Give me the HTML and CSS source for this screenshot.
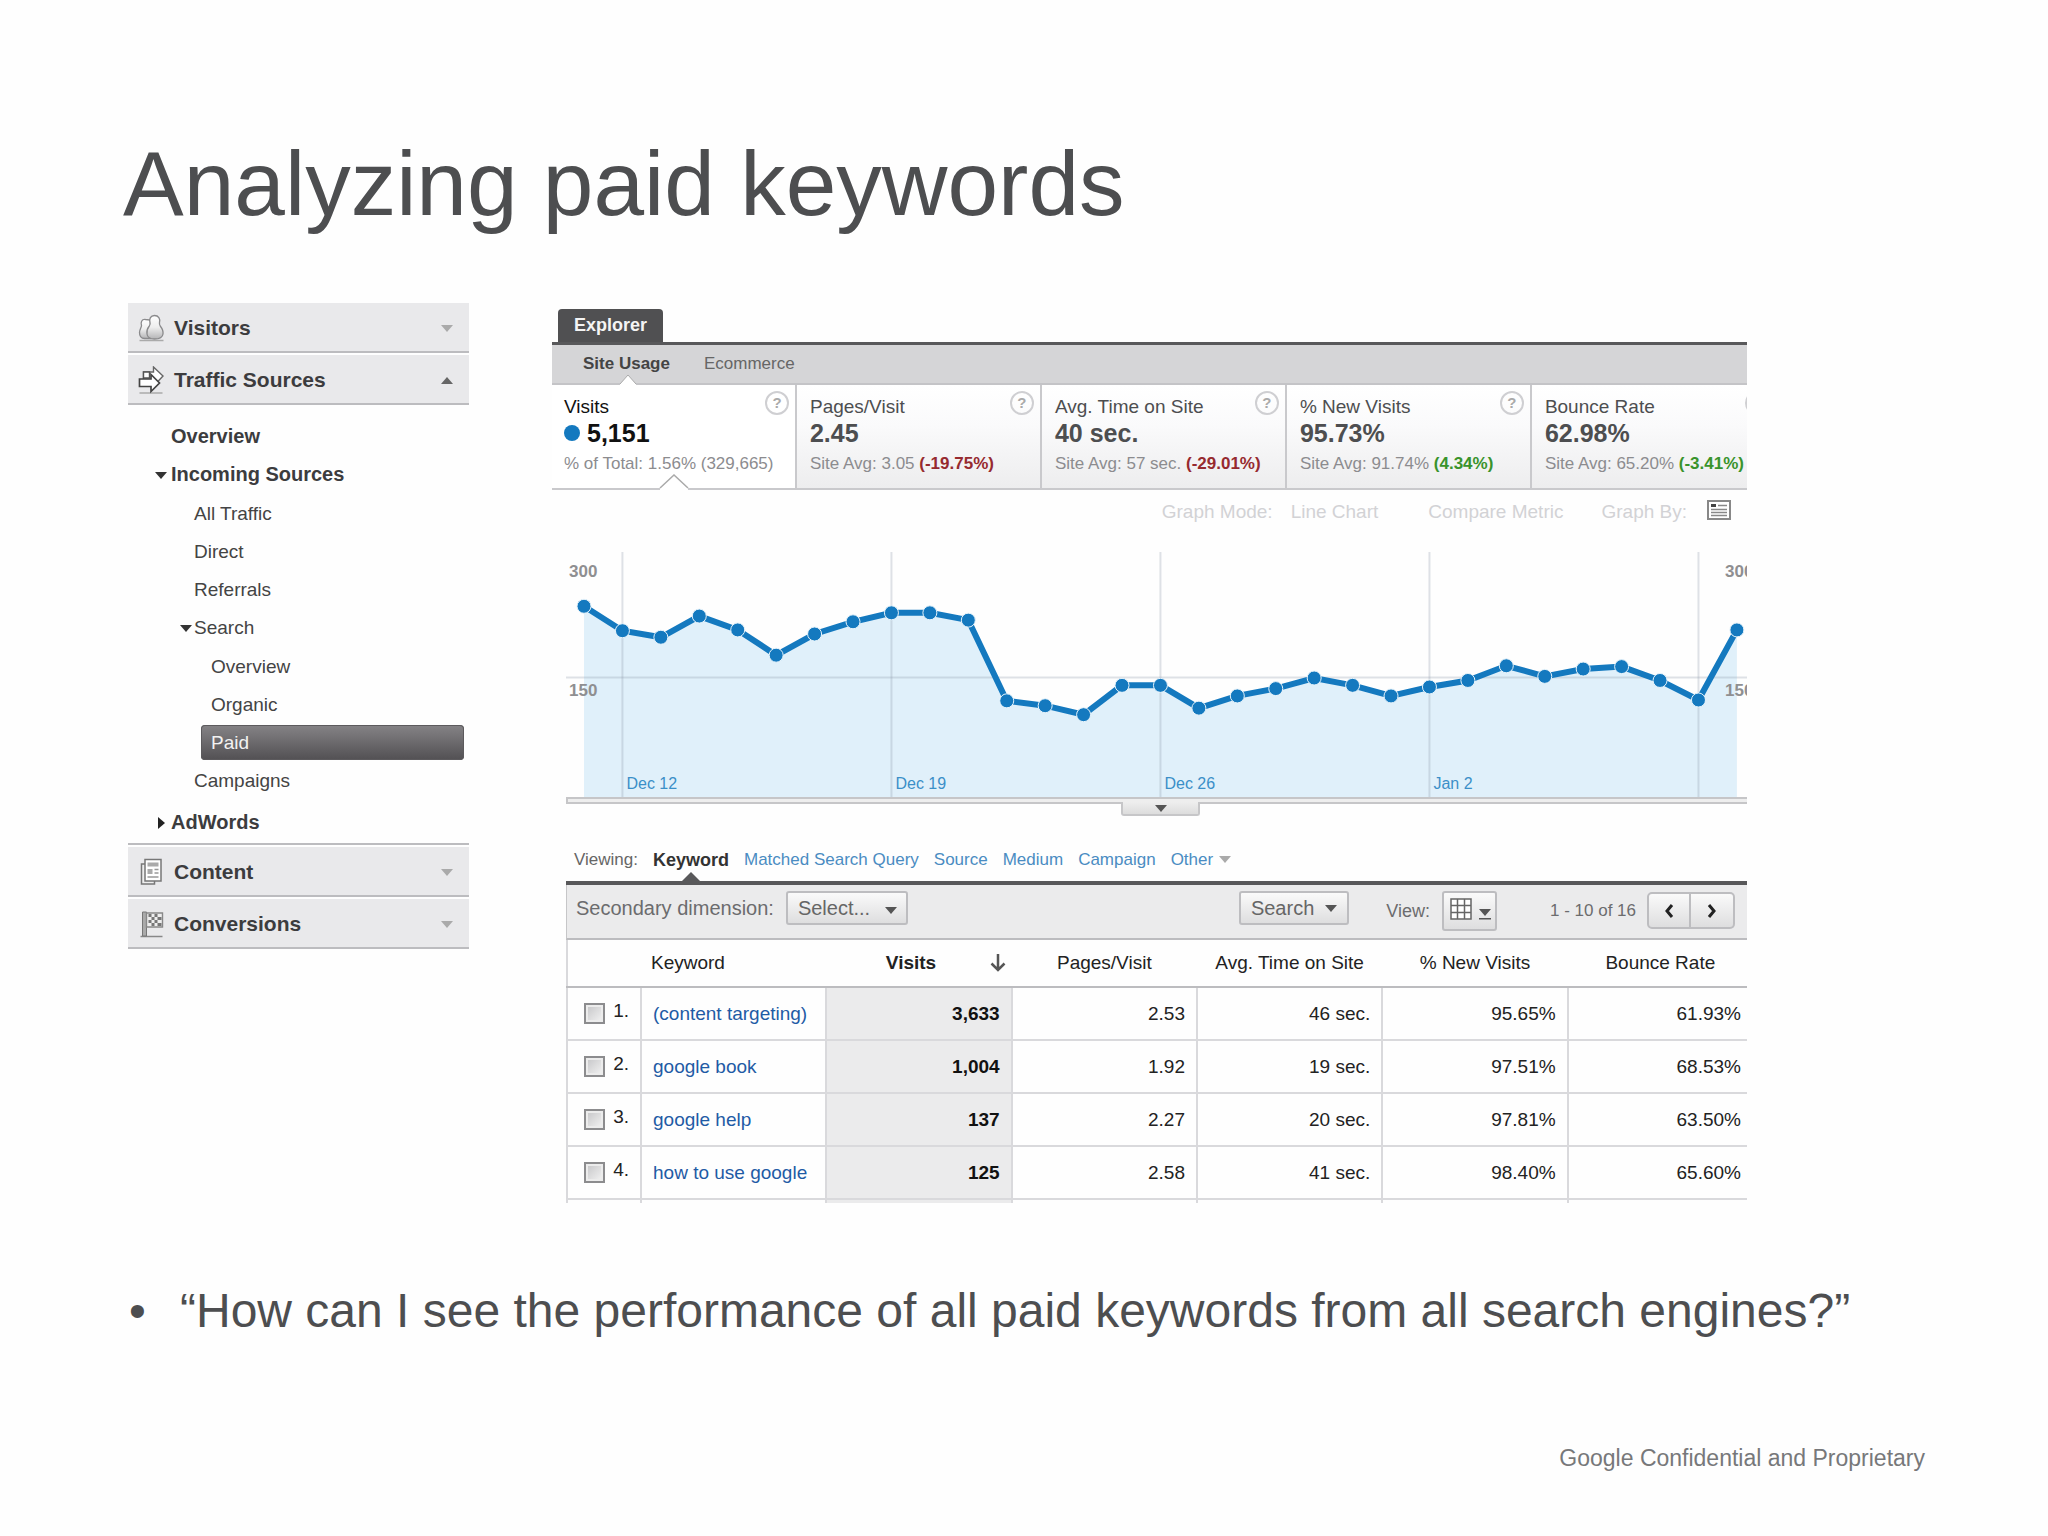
FILE: index.html
```html
<!DOCTYPE html>
<html lang="en">
<head>
  <meta charset="UTF-8" />
  <title>Analyzing paid keywords</title>
  <meta name="viewport" content="width=device-width, initial-scale=1.0" />
  <link rel="stylesheet" href="styles.css">
</head>
<body>
  <h1>Analyzing paid keywords</h1>

  <div class="report">
    <nav class="sidebar">
      <button class="section">
        <svg class="section-icon" viewBox="0 0 26 28">
          <defs>
            <linearGradient id="grey" x1="0" y1="0" x2="0" y2="1">
              <stop offset="0" stop-color="#ffffff" /><stop offset="0.5" stop-color="#eeeeee" /><stop offset="1" stop-color="#b4b4b6" />
            </linearGradient>
          </defs>
          <path d="M1 26.500h24" stroke="#aaa" stroke-width="1.500" />
          <path d="M7 5.500c-4-.5-5 3-4 6 0 2-2 4-2 7s1 6 5 6h6V6z" fill="url(#grey)" stroke="#8a8a8c" stroke-width="1.300" />
          <path d="M16 1.500c-4 0-5.500 3.500-4.500 7 .4 1.500.4 2-.7 3.500-2 2.500-2.800 5-2.300 8 .5 4 3 5 7.500 5s8-1 8.500-5c.4-3-.8-5.500-2.800-8-1-1.500-1-2-.7-3.500 1-3.500-1-7-5-7z" fill="url(#grey)" stroke="#8a8a8c" stroke-width="1.300" />
        </svg>
        Visitors
        <span class="caret"></span>
      </button>
      <button class="section">
        <svg class="section-icon" viewBox="0 0 26 28">
          <path d="M1 27h23" stroke="#aaa" stroke-width="1.500" />
          <path d="M5 6h10V1l9.500 9-7 7.500-2-2H5z" fill="#fff" stroke="#666" stroke-width="1.400" />
          <path d="M5 6h6v6H5z" fill="#fff" stroke="#555" stroke-width="1.400" />
          <path d="M1 13h11.500V8.500L21 17l-8.500 8.500v-5H1z" fill="#fff" stroke="#444" stroke-width="1.700" />
        </svg>
        Traffic Sources
        <span class="caret up"></span>
      </button>

      <ul class="menu">
        <li><a class="level1" href="#">Overview</a></li>
        <li><a class="level1 open" href="#">Incoming Sources</a></li>
        <li><a class="level2" href="#">All Traffic</a></li>
        <li><a class="level2" href="#">Direct</a></li>
        <li><a class="level2" href="#">Referrals</a></li>
        <li><a class="level2 open" href="#">Search</a></li>
        <li><a class="level3" href="#">Overview</a></li>
        <li><a class="level3" href="#">Organic</a></li>
        <li><a class="level3 selected" href="#">Paid</a></li>
        <li><a class="level2" href="#">Campaigns</a></li>
        <li><a class="level1 closed" href="#">AdWords</a></li>
      </ul>

      <button class="section">
        <svg class="section-icon" viewBox="0 0 26 28">
          <path d="M3 6h13v20H3z" fill="#eee" stroke="#777" stroke-width="1.500" />
          <path d="M6.500 1.500h16V23h-16z" fill="#fff" stroke="#777" stroke-width="1.500" />
          <path d="M9 4.500h11v4H9zM9 11h5v5H9z" fill="#aaa" />
          <path d="M16 11.500h4M16 15h4M9 19h11" stroke="#999" stroke-width="1.300" />
        </svg>
        Content
        <span class="caret"></span>
      </button>
      <button class="section">
        <svg class="section-icon" viewBox="0 0 26 28">
          <path d="M2 26.500h22" stroke="#888" stroke-width="1.500" />
          <path d="M4 2h4v24H4z" fill="#aaa" stroke="#777" />
          <path d="M8 3h16v14H8z" fill="#eee" stroke="#888" stroke-width="1.400" />
          <path d="M10 4h3v3h-3zM16 4h3v3h-3zM13 7h3v3h-3zM19 7h4v3h-4zM10 10h3v3h-3zM16 10h3v3h-3zM13 13h3v3h-3zM19 13h4v3h-4z" fill="#777" />
        </svg>
        Conversions
        <span class="caret"></span>
      </button>
    </nav>

    <main class="explorer">
      <div class="tabs"><a href="#">Explorer</a></div>
      <div class="subtabs">
        <a class="active" href="#">Site Usage
          <svg class="notch" viewBox="0 0 16 11"><path d="M0 10 8 1l8 9v1H0z" fill="#fff" /><path d="M0 10 8 1l8 9" fill="none" stroke="#aaa" /></svg>
        </a>
        <a href="#">Ecommerce</a>
      </div>

      <div class="cards">
        <div class="card current">
          <div class="name">Visits</div>
          <div class="value"><span class="bullet"></span>5,151</div>
          <div class="note">% of Total: 1.56% (329,665)</div>
          <button class="help">?</button>
          <svg class="notch" viewBox="0 0 30 16"><path d="M1 14 15 1l14 13v2H1z" fill="#fff" /><path d="M1 14 15 1l14 13" fill="none" stroke="#aaa" stroke-width="1.500" /></svg>
        </div>
        <div class="card">
          <div class="name">Pages/Visit</div>
          <div class="value">2.45</div>
          <div class="note">Site Avg: 3.05 <b class="down">(-19.75%)</b></div>
          <button class="help">?</button>
        </div>
        <div class="card">
          <div class="name">Avg. Time on Site</div>
          <div class="value">40 sec.</div>
          <div class="note">Site Avg: 57 sec. <b class="down">(-29.01%)</b></div>
          <button class="help">?</button>
        </div>
        <div class="card">
          <div class="name">% New Visits</div>
          <div class="value">95.73%</div>
          <div class="note">Site Avg: 91.74% <b class="up">(4.34%)</b></div>
          <button class="help">?</button>
        </div>
        <div class="card">
          <div class="name">Bounce Rate</div>
          <div class="value">62.98%</div>
          <div class="note">Site Avg: 65.20% <b class="up">(-3.41%)</b></div>
          <button class="help">?</button>
        </div>
      </div>

      <div class="graph-options">
        <span>Graph Mode:</span>
        <span class="mode">Line Chart</span>
        <span class="compare">Compare Metric</span>
        <span>Graph By:</span>
        <svg class="graph-by" viewBox="0 0 24 20">
          <path d="M1 1h22v18H1z" fill="#fff" stroke="#888" stroke-width="2" />
          <path d="M4 4h5v3H4z" fill="#444" />
          <path d="M11 5.500h9M4 9.500h16M4 12.500h16M4 15.500h16" stroke="#888" stroke-width="1.300" />
        </svg>
      </div>

      <div class="data">
        <svg class="chart" id="chart" viewBox="0 0 1181 245"></svg>
        <div class="slider"></div>
        <button class="slider-handle" aria-label="Toggle graph"><span class="caret"></span></button>

        <div class="viewing">
          <span>Viewing:</span>
          <a class="active" href="#">Keyword</a>
          <a href="#">Matched Search Query</a>
          <a href="#">Source</a>
          <a href="#">Medium</a>
          <a href="#">Campaign</a>
          <a href="#">Other<span class="caret"></span></a>
        </div>

        <div class="toolbar">
          <label for="dimension">Secondary dimension:</label>
          <div class="dropdown">
            <select id="dimension"><option>Select...</option></select>
            <span class="caret"></span>
          </div>
          <button class="search">Search<span class="caret"></span></button>
          <span class="view-label">View:</span>
          <button class="view" aria-label="Table view">
            <svg viewBox="0 0 22 22"><path d="M1 1h20v20H1zM7.500 1v20M14.500 1v20M1 7.500h20M1 14.500h20" fill="#fff" stroke="#666" stroke-width="1.500" /></svg>
            <svg class="view-caret" viewBox="0 0 12 12"><path d="M0 1h12L6 8zM0 10h12v1.500H0z" fill="#555" /></svg>
          </button>
          <span class="count">1 - 10 of 16</span>
          <div class="pager">
            <button aria-label="Previous"><svg viewBox="0 0 10 14"><path d="M8 1 3 7l5 6" fill="none" stroke="#222" stroke-width="3" /></svg></button>
            <button aria-label="Next"><svg viewBox="0 0 10 14"><path d="m2 1 5 6-5 6" fill="none" stroke="#222" stroke-width="3" /></svg></button>
          </div>
        </div>

        <table>
          <colgroup>
            <col class="col-number"><col><col><col><col><col><col>
          </colgroup>
          <thead>
            <tr>
              <th></th>
              <th class="keyword">Keyword</th>
              <th class="visits">Visits
                <svg class="sort" viewBox="0 0 16 18"><path d="M8 0v16M1.500 9.500 8 16l6.500-6.500" fill="none" stroke="#555" stroke-width="2.500" /></svg>
              </th>
              <th>Pages/Visit</th>
              <th>Avg. Time on Site</th>
              <th>% New Visits</th>
              <th>Bounce Rate</th>
            </tr>
          </thead>
          <tbody>
            <tr>
              <td><label class="row-number"><input type="checkbox" /><span>1.</span></label></td>
              <td class="keyword"><a href="#">(content targeting)</a></td>
              <td class="visits">3,633</td><td>2.53</td><td>46 sec.</td><td>95.65%</td><td>61.93%</td>
            </tr>
            <tr>
              <td><label class="row-number"><input type="checkbox" /><span>2.</span></label></td>
              <td class="keyword"><a href="#">google book</a></td>
              <td class="visits">1,004</td><td>1.92</td><td>19 sec.</td><td>97.51%</td><td>68.53%</td>
            </tr>
            <tr>
              <td><label class="row-number"><input type="checkbox" /><span>3.</span></label></td>
              <td class="keyword"><a href="#">google help</a></td>
              <td class="visits">137</td><td>2.27</td><td>20 sec.</td><td>97.81%</td><td>63.50%</td>
            </tr>
            <tr>
              <td><label class="row-number"><input type="checkbox" /><span>4.</span></label></td>
              <td class="keyword"><a href="#">how to use google</a></td>
              <td class="visits">125</td><td>2.58</td><td>41 sec.</td><td>98.40%</td><td>65.60%</td>
            </tr>
            <tr class="cut" aria-hidden="true">
              <td></td><td></td><td class="visits"></td><td></td><td></td><td></td><td></td>
            </tr>
          </tbody>
        </table>
      </div>
    </main>
  </div>

  <ul class="question">
    <li>“How can I see the performance of all paid keywords from all search engines?”</li>
  </ul>

  <footer>Google Confidential and Proprietary</footer>

  <script>
    // daily visits, Dec 11 - Jan 10
    const visits = [234, 204, 196, 222, 205, 174, 200, 215, 226, 226, 217, 118, 112, 101, 137, 137,
      109, 124, 133, 146, 137, 124, 135, 143, 161, 148, 157, 160, 143, 119, 205];
    const weeks = { 1: 'Dec 12', 8: 'Dec 19', 15: 'Dec 26', 22: 'Jan 2', 29: '' };
    const px = i => 18 + i * 38.43;
    const py = v => 245 - v * 0.815;

    const points = visits.map((v, i) => px(i).toFixed(1) + ',' + py(v).toFixed(1));
    let out = '<polygon class="area" points="' + px(0) + ',245 ' + points.join(' ') + ' ' + px(30) + ',245" />';
    out += '<path class="grid" d="M0 125.500H1181" />';
    for (const i in weeks) {
      out += '<path class="grid" d="M' + px(i) + ' 0V245" />';
      out += '<text class="week" x="' + (px(i) + 4) + '" y="237">' + weeks[i] + '</text>';
    }
    for (const x of [3, 1159]) {
      out += '<text class="axis" x="' + x + '" y="25">300</text><text class="axis" x="' + x + '" y="144">150</text>';
    }
    out += '<polyline class="line" points="' + points.join(' ') + '" />';
    visits.forEach((v, i) => {
      out += '<circle class="point" cx="' + px(i) + '" cy="' + py(v) + '" r="7" />';
    });
    document.getElementById('chart').innerHTML = out;
  </script>
</body>
</html>
```
FILE: styles.css
```css
* {
  box-sizing: border-box;
}

body {
  margin: 0;
  padding: 134px 123px 60px;
  background: #fefefe;
  color: #4d4e50;
  font-family: "Liberation Sans", Arial, sans-serif;
  font-size: 19px;
}

h1 {
  margin: 0 0 69px;
  font-size: 91px;
  font-weight: normal;
  line-height: 100px;
}

a {
  color: inherit;
  text-decoration: none;
}

button, select {
  font-family: inherit;
  cursor: pointer;
}

.report {
  display: grid;
  grid-template-columns: 341px minmax(0, 1fr);
  column-gap: 83px;
  align-items: start;
  margin: 0 178px 0 5px;
}

.caret {
  display: inline-block;
  border: 6px solid transparent;
  border-top: 7px solid #555;
  border-bottom: 0;
}

.caret.up {
  border-top: 0;
  border-bottom: 7px solid #666;
}

/* sidebar */

.section {
  display: flex;
  align-items: center;
  gap: 9px;
  width: 100%;
  height: 50px;
  margin-bottom: 2px;
  padding: 2px 16px 0 10px;
  border: 0;
  border-bottom: 2px solid #bcbcbf;
  background: #e9e9eb;
  color: #3c3c3e;
  font-size: 21px;
  font-weight: bold;
}

.section-icon {
  width: 27px;
  height: 28px;
}

.section .caret {
  margin-left: auto;
}

.section .caret:not(.up) {
  border-top-color: #aaa;
}

.menu {
  list-style: none;
  margin: 0 0 2px;
  padding: 12px 5px 0 0;
  border-bottom: 2px solid #bcbcbf;
}

.menu a {
  display: block;
  position: relative;
  margin-bottom: 3px;
  line-height: 35px;
  color: #444;
}

.menu .level1 {
  padding-left: 43px;
  font-size: 20px;
  font-weight: bold;
  color: #3c3c3e;
}

.menu .level2 {
  padding-left: 66px;
}

.menu .level3 {
  margin-left: 73px;
  padding-left: 10px;
}

.menu .selected {
  border-radius: 4px;
  background: linear-gradient(#858386, #525053);
  box-shadow: inset 0 0 0 1px #5c5a5d;
  color: #f2f2f2;
}

.menu .open {
  margin-bottom: 4px;
}

.menu .closed {
  margin: 7px 0 3px;
}

.menu .open::before, .menu .closed::before {
  content: '';
  position: absolute;
  left: 27px;
  top: 15px;
  border: 6px solid transparent;
  border-top: 7px solid #333;
  border-bottom: 0;
}

.menu .level2.open::before {
  left: 52px;
}

.menu .closed::before {
  left: 30px;
  top: 12px;
  border: 6px solid transparent;
  border-left: 7px solid #222;
  border-right: 0;
}

/* explorer */

.explorer {
  padding-top: 6px;
  overflow: hidden;
}

.tabs {
  display: flex;
  padding-left: 6px;
  border-bottom: 3px solid #58585a;
}

.tabs a {
  padding: 0 16px;
  border-radius: 4px 4px 0 0;
  background: #505052;
  color: #f4f4f4;
  font-size: 18px;
  font-weight: bold;
  line-height: 33px;
}

.subtabs {
  display: flex;
  gap: 34px;
  padding-left: 31px;
  border-bottom: 2px solid #c4c4c7;
  background: #d5d5d7;
  font-size: 17px;
  line-height: 38px;
  color: #666;
}

.subtabs .active {
  position: relative;
  color: #444;
  font-weight: bold;
}

.subtabs .notch {
  position: absolute;
  left: 37px;
  bottom: -2px;
  width: 16px;
  height: 11px;
}

.cards {
  display: flex;
  border-bottom: 2px solid #c9c9cc;
}

.card {
  position: relative;
  flex: 0 0 20.5%;
  padding: 10px 12px 12px 13px;
  border-right: 2px solid #c9c9cc;
  background: linear-gradient(#fff, #fafafb 40%, #ededee);
  white-space: nowrap;
}

.card.current {
  padding-left: 12px;
  background: #fff;
}

.card .name {
  line-height: 24px;
}

.card .value {
  display: flex;
  align-items: center;
  gap: 7px;
  margin-bottom: 5px;
  font-size: 25px;
  font-weight: bold;
  line-height: 28px;
}

.card.current .name, .card.current .value {
  color: #111;
}

.bullet {
  width: 16px;
  height: 16px;
  border-radius: 50%;
  background: #1479bf;
}

.card .note {
  font-size: 17px;
  line-height: 24px;
  color: #8c8c8f;
}

.note .down {
  color: #962a2f;
}

.note .up {
  color: #39932c;
}

.help {
  position: absolute;
  top: 6px;
  right: 6px;
  width: 24px;
  height: 24px;
  padding: 0;
  border: 2px solid #cfcfd2;
  border-radius: 50%;
  background: transparent;
  color: #aaa;
  font-size: 15px;
  font-weight: bold;
  line-height: 20px;
}

.card .notch {
  position: absolute;
  left: 107px;
  bottom: -2px;
  width: 30px;
  height: 16px;
}

.graph-options {
  display: flex;
  justify-content: flex-end;
  padding: 10px 16px 28px 0;
  line-height: 24px;
  color: #d2d2d5;
}

.graph-options .mode {
  margin-left: 18px;
}

.graph-options .compare {
  margin: 0 38px 0 50px;
}

.graph-by {
  width: 24px;
  height: 20px;
  margin-left: 20px;
}

.data {
  margin-left: 14px;
}

.chart {
  display: block;
  width: 100%;
}

.chart .area {
  fill: #e0f0fa;
}

.chart .grid {
  stroke: #8c96aa;
  stroke-opacity: 0.28;
  stroke-width: 2;
}

.chart .line {
  fill: none;
  stroke: #1479bf;
  stroke-width: 6;
}

.chart .point {
  fill: #1479bf;
  stroke: #e8f4fb;
  stroke-width: 1;
}

.chart .week {
  fill: #3b8fc8;
  font-size: 16px;
}

.chart .axis {
  fill: #8f8f91;
  font-size: 17px;
  font-weight: bold;
}

.slider {
  height: 7px;
  border: 2px solid #c6c6c8;
  border-right: 0;
  background: #eee;
}

.slider-handle {
  display: block;
  width: 79px;
  height: 14px;
  margin: -2px 0 32px 47%;
  padding: 0;
  border: 2px solid #c6c6c8;
  border-top: 0;
  border-radius: 0 0 3px 3px;
  background: linear-gradient(#eee, #dcdcdc);
  line-height: 0;
}

.viewing {
  display: flex;
  gap: 15px;
  padding: 0 8px 9px;
  border-bottom: 4px solid #58585a;
  font-size: 17px;
  line-height: 24px;
  color: #666;
}

.viewing a {
  color: #4a8cc2;
}

.viewing .active {
  position: relative;
  color: #333;
  font-size: 18px;
  font-weight: bold;
}

.viewing .active::after {
  content: '';
  position: absolute;
  left: 29px;
  bottom: -9px;
  border: 9px solid transparent;
  border-top: 0;
  border-bottom: 9px solid #58585a;
}

.viewing .caret {
  margin: 0 0 2px 6px;
  border-top-color: #aaa;
}

.toolbar {
  display: flex;
  align-items: flex-start;
  height: 55px;
  padding: 6px 12px 0 9px;
  border-left: 1px solid #c6c6c8;
  border-bottom: 2px solid #bcbcbf;
  background: #ebebec;
  font-size: 20px;
  line-height: 34px;
  color: #6c6c6e;
}

.toolbar button, .toolbar select {
  border: 2px solid #bdbdc0;
  border-radius: 3px;
  background: linear-gradient(#fafafa, #dededf);
  color: #666;
  font-size: 20px;
}

.dropdown {
  position: relative;
  margin-left: 12px;
}

.dropdown select {
  appearance: none;
  display: block;
  width: 122px;
  height: 34px;
  padding: 0 10px;
}

.dropdown .caret {
  position: absolute;
  right: 11px;
  top: 16px;
  pointer-events: none;
}

.toolbar .search {
  display: flex;
  align-items: center;
  gap: 11px;
  height: 34px;
  margin-left: auto;
  padding: 0 10px;
}

.view-label, .count {
  font-size: 18px;
  line-height: 40px;
}

.view-label {
  margin: 0 12px 0 37px;
}

.toolbar .view {
  display: flex;
  align-items: center;
  gap: 7px;
  width: 55px;
  height: 40px;
  padding: 0 5px 4px 6px;
}

.view svg {
  flex: none;
  width: 22px;
  height: 22px;
}

.view .view-caret {
  width: 12px;
  height: 12px;
  margin-top: 10px;
}

.count {
  margin: 0 11px 0 53px;
  font-size: 17px;
}

.pager {
  display: flex;
  margin-top: 1px;
}

.toolbar .pager button {
  display: flex;
  align-items: center;
  justify-content: center;
  width: 44px;
  height: 37px;
  padding: 0;
  border-radius: 5px 0 0 5px;
}

.toolbar .pager button + button {
  border-left: 0;
  border-radius: 0 5px 5px 0;
}

.pager svg {
  width: 10px;
  height: 14px;
}

/* the last column runs a little past the panel edge */
table {
  width: calc(100% + 7px);
  table-layout: fixed;
  border-collapse: collapse;
  color: #222;
}

.col-number {
  width: 74px;
}

th {
  height: 47px;
  padding: 0;
  border-bottom: 2px solid #bcbcbf;
  font-weight: normal;
}

th:first-child, td:first-child {
  border-left: 2px solid #d9d9dc;
}

th.visits {
  position: relative;
  padding-right: 16px;
  font-weight: bold;
}

th.keyword {
  padding-left: 10px;
  text-align: left;
}

.sort {
  position: absolute;
  right: 6px;
  top: 14px;
  width: 16px;
  height: 18px;
}

td {
  height: 53px;
  padding: 0 11px;
  border-right: 2px solid #d9d9dc;
  border-bottom: 2px solid #d9d9dc;
  text-align: right;
}

td.keyword {
  text-align: left;
  color: #1f5ba5;
  white-space: nowrap;
}

td.visits {
  background: #ebebec;
  color: #111;
  font-weight: bold;
}

.cut td {
  height: 4px;
  border-bottom: 0;
}

.row-number {
  display: flex;
  align-items: center;
  justify-content: flex-end;
  gap: 8px;
}

.row-number span {
  padding-bottom: 5px;
}

.row-number input {
  appearance: none;
  width: 21px;
  height: 21px;
  margin: 0;
  border: 2px solid #8c8c8e;
  background: linear-gradient(135deg, #c4c4c6, #f4f4f4);
  box-shadow: inset 0 0 0 2px #ececec;
}

.question {
  list-style: none;
  margin: 80px 0 105px;
  padding-left: 57px;
  font-size: 48px;
  line-height: 56px;
}

.question li {
  position: relative;
}

.question li::before {
  content: '•';
  position: absolute;
  left: -51px;
}

footer {
  text-align: right;
  font-size: 23px;
  line-height: 28px;
  color: #77787a;
}
```
